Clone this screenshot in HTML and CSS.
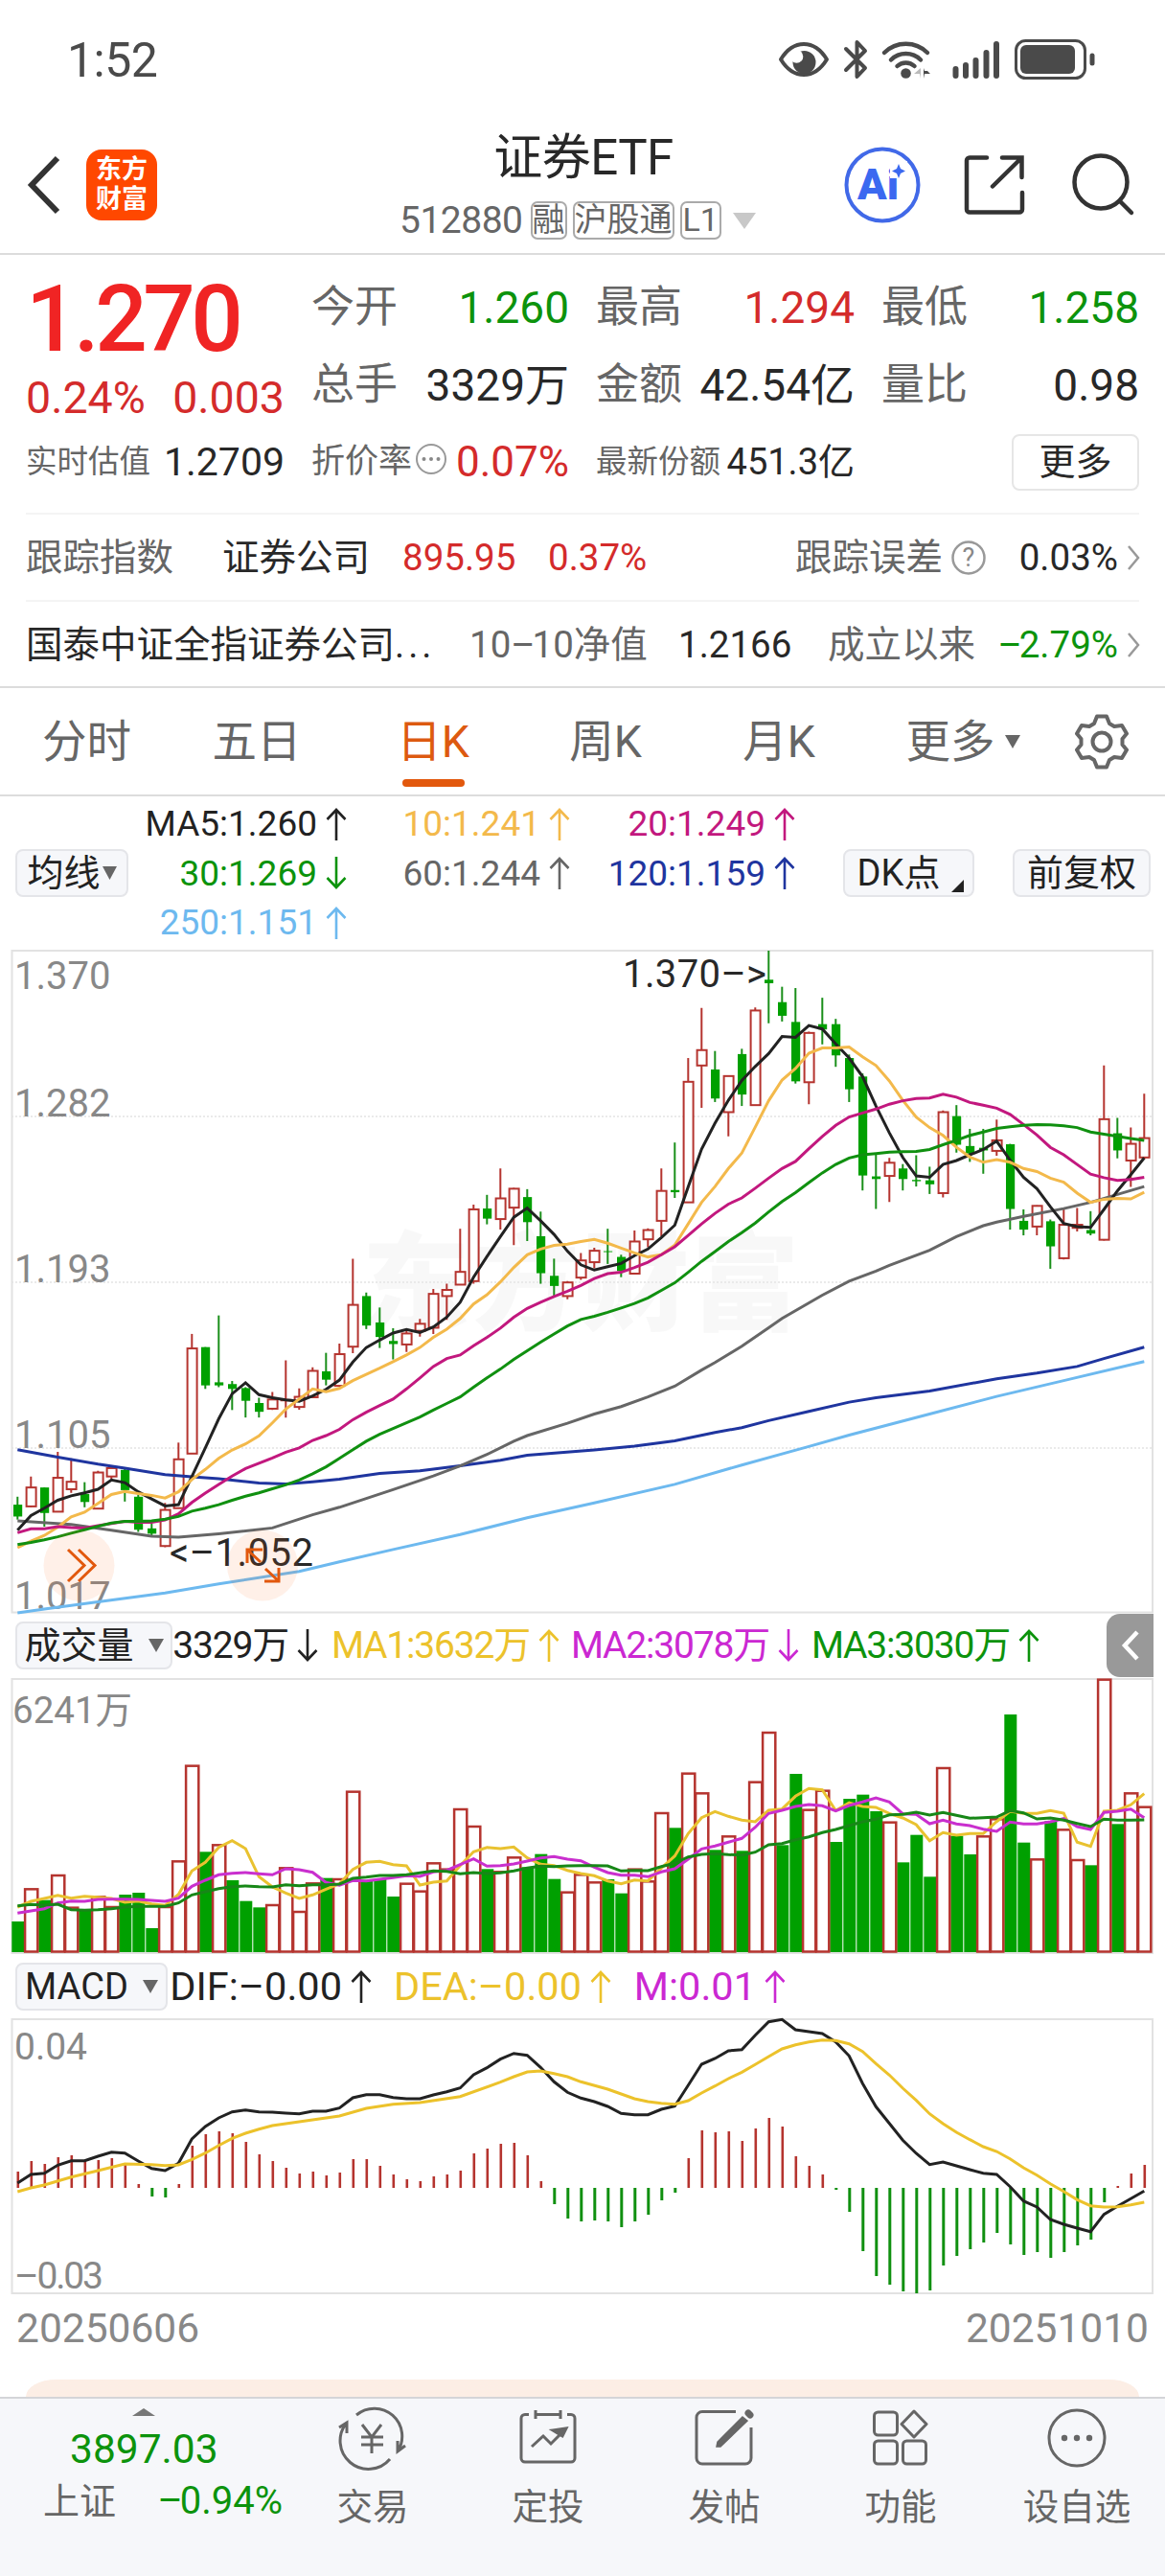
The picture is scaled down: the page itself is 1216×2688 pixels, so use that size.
FILE: index.html
```
<!DOCTYPE html>
<html lang="zh-CN">
<head>
    <meta charset="UTF-8">
    <meta name="viewport" content="width=device-width, initial-scale=1.0">
    <title>证券ETF 512880</title>
    <link rel="stylesheet" href="styles.css">
</head>
<body>
    <svg class="defs" width="0" height="0">
        <symbol id="up" viewBox="0 0 22 36"><path d="M11 35V3M1.5 13L11 3l9.500 10" fill="none" stroke="currentColor" stroke-width="2.600"/></symbol>
        <symbol id="down" viewBox="0 0 22 36"><path d="M11 1v32M1.500 23L11 33l9.500-10" fill="none" stroke="currentColor" stroke-width="2.600"/></symbol>
        <symbol id="chevron" viewBox="0 0 14 28"><path d="M2 2l10 12L2 26" fill="none" stroke="#999" stroke-width="2.500"/></symbol>
    </svg>

    <div class="status">
        <span class="clock">1:52</span>
        <svg width="336" height="46" viewBox="810 39 336 46">
            <path d="M815 61C822 49.500 830 45 839 45S856 49.500 863 61C856 72.500 848 77 839 77S822 72.500 815 61Z" fill="none" stroke="#4a4a4a" stroke-width="4" stroke-linejoin="round"/>
            <circle cx="839.500" cy="64" r="12" fill="#4a4a4a"/>
            <circle cx="831.500" cy="58" r="6.800" fill="#fff"/>
            <path d="M883 50l20 20-8.500 9V43l8.500 9-20 20" fill="none" stroke="#4a4a4a" stroke-width="4" stroke-linecap="round" stroke-linejoin="round"/>
            <path d="M923 54a32 32 0 0 1 45 0M930 61.500a22 22 0 0 1 31 0M936.500 68a13 13 0 0 1 18 0" fill="none" stroke="#4a4a4a" stroke-width="4.500" stroke-linecap="round"/>
            <circle cx="945.500" cy="75.500" r="5.300" fill="#4a4a4a"/>
            <path d="M961 70v11l-1-5h-6z" fill="#bbb"/>
            <path d="M964 70v11l1-5h6l-3-3h-3z" fill="#4a4a4a"/>
            <path d="M997.500 71v7M1008 67v11M1018.500 62v16M1029.500 54v24M1040 45v33" stroke="#4a4a4a" stroke-width="6" stroke-linecap="round"/>
            <rect x="1060.500" y="41.500" width="72" height="39" rx="10" fill="none" stroke="#4a4a4a" stroke-width="3"/>
            <rect x="1065" y="46" width="57" height="30" rx="6" fill="#4a4a4a"/>
            <path d="M1140 57v8" stroke="#4a4a4a" stroke-width="5" stroke-linecap="round"/>
        </svg>
    </div>

    <div class="header">
        <div class="header-left">
            <svg width="36" height="62" viewBox="0 0 36 62"><path d="M32 3L5 31l27 28" fill="none" stroke="#333" stroke-width="6"/></svg>
            <div class="logo"><span>东方</span><span>财富</span></div>
        </div>
        <div class="title-box">
            <div class="title">证券ETF</div>
            <div class="subtitle">
                <span>512880</span>
                <i class="badge">融</i><i class="badge">沪股通</i><i class="badge">L1</i>
                <svg width="24" height="17"><path d="M0 0h24L12 17z" fill="#c8c8c8"/></svg>
            </div>
        </div>
        <svg class="header-icons" width="316" height="84" viewBox="880 151 316 84">
            <circle cx="921" cy="193" r="37.500" fill="none" stroke="#4169e8" stroke-width="4"/>
            <text x="895" y="208" class="ai-text">Ai</text>
            <path d="M929 168h18v18h-18z" fill="#fff"/>
            <path d="M938 171l2 5 5 2.500-5 2.500-2 5-2-5-5-2.500 5-2.500z" fill="#3b69f0"/>
            <path d="M1030 164.500h-18a3 3 0 0 0-3 3v51a3 3 0 0 0 3 3h52a3 3 0 0 0 3-3V201M1046 164.500h20.500V185M1066 165l-30 29.500" fill="none" stroke="#333" stroke-width="4.500" stroke-linecap="round"/>
            <circle cx="1149" cy="190" r="27.500" fill="none" stroke="#333" stroke-width="4.500"/>
            <path d="M1169 210l12 12" stroke="#333" stroke-width="4.500" stroke-linecap="round"/>
        </svg>
    </div>

    <div class="quote">
        <div class="quote-grid">
            <div class="price-box">
                <div class="price">1.270</div>
                <div class="change"><span>0.24%</span><span>0.003</span></div>
            </div>
            <div class="cell"><label>今开</label><b class="green">1.260</b></div>
            <div class="cell"><label>最高</label><b class="red">1.294</b></div>
            <div class="cell"><label>最低</label><b class="green">1.258</b></div>
            <div class="cell"><label>总手</label><b>3329万</b></div>
            <div class="cell"><label>金额</label><b>42.54亿</b></div>
            <div class="cell"><label>量比</label><b>0.98</b></div>
            <div class="cell small"><label>实时估值</label><b>1.2709</b></div>
            <div class="cell small rate">
                <label>折价率</label>
                <svg width="34" height="34"><circle cx="17" cy="17" r="15" fill="none" stroke="#999" stroke-width="2"/><g fill="#888"><circle cx="9.500" cy="17" r="2"/><circle cx="17" cy="17" r="2"/><circle cx="24.500" cy="17" r="2"/></g></svg>
                <b class="red">0.07%</b>
            </div>
            <div class="cell small share"><label>最新份额</label><b>451.3亿</b></div>
            <div class="cell last"><button class="more">更多</button></div>
        </div>
        <div class="line index-line">
            <span class="gray">跟踪指数</span>
            <span>证券公司</span>
            <span class="red">895.95</span>
            <span class="red">0.37%</span>
            <span class="gray">跟踪误差</span>
            <svg width="38" height="38"><circle cx="19" cy="19" r="16.500" fill="none" stroke="#999" stroke-width="2.500"/><text x="19" y="28" class="help">?</text></svg>
            <span class="right">0.03%</span>
            <svg width="14" height="28"><use href="#chevron"/></svg>
        </div>
        <div class="line fund-line">
            <span>国泰中证全指证券公司<i class="dots">...</i></span>
            <span class="gray">10<em>–</em>10净值</span>
            <span>1.2166</span>
            <span class="gray">成立以来</span>
            <span class="green right"><em>–</em>2.79%</span>
            <svg width="14" height="28"><use href="#chevron"/></svg>
        </div>
    </div>

    <div class="tabs">
        <span>分时</span>
        <span>五日</span>
        <span class="active">日K</span>
        <span>周K</span>
        <span>月K</span>
        <span class="tab-more">更多<svg width="16" height="14"><path d="M0 0h16L8 14z" fill="#666"/></svg></span>
        <svg class="gear" width="60" height="60" viewBox="-30 -30 60 60">
            <path d="M-5-26.500H5L8-19 13-16 21-17 26-8.500 21.500-3V3L26 8.500 21 17 13 16 8 19 5 26.500H-5L-8 19-13 16-21 17-26 8.500-21.500 3V-3L-26-8.500-21-17-13-16-8-19Z" fill="none" stroke="#666" stroke-width="4" stroke-linejoin="round"/>
            <circle r="9.500" fill="none" stroke="#666" stroke-width="4"/>
        </svg>
    </div>

    <div class="legend">
        <button class="pill ma-btn">均线<svg width="15" height="14"><path d="M0 0h15L7.500 14z" fill="#666"/></svg></button>
        <div class="ma-grid">
            <span class="black">MA5:1.260<svg><use href="#up"/></svg></span>
            <span class="orange">10:1.241<svg><use href="#up"/></svg></span>
            <span class="pink">20:1.249<svg><use href="#up"/></svg></span>
            <span class="green">30:1.269<svg><use href="#down"/></svg></span>
            <span class="gray">60:1.244<svg><use href="#up"/></svg></span>
            <span class="blue">120:1.159<svg><use href="#up"/></svg></span>
            <span class="sky">250:1.151<svg><use href="#up"/></svg></span>
        </div>
        <button class="pill dk-btn">DK点<svg width="13" height="13"><path d="M13 0v13H0z" fill="#222"/></svg></button>
        <button class="pill fq-btn">前复权</button>
    </div>

    <svg class="chart" width="1216" height="693" viewBox="0 991 1216 693">
        <text x="378" y="1380" class="watermark" textLength="456">东方财富</text>
        <g class="grid">
            <path d="M12 1165H1203M12 1338H1203M12 1511H1203"/>
        </g>
        <rect x="12.500" y="992" width="1190.500" height="690.500" class="frame"/>
        <g class="axis">
            <text x="15" y="1032">1.370</text>
            <text x="15" y="1165">1.282</text>
            <text x="15" y="1338">1.193</text>
            <text x="15" y="1511">1.105</text>
            <text x="15" y="1679">1.017</text>
        </g>
        <g id="kline"></g>
        <text x="650" y="1030" class="mark" textLength="150">1.370–&gt;</text>
        <text x="177" y="1634" class="mark" textLength="150">&lt;–1.052</text>
        <g fill="#ff6a1a" fill-opacity=".1">
            <circle cx="82.500" cy="1633.500" r="37"/>
            <circle cx="274" cy="1633.500" r="37"/>
        </g>
        <g fill="none" stroke="#e2580d" stroke-width="3">
            <path d="M71 1617l17 16.500L71 1650M82 1617l17 16.500L82 1650"/>
            <path d="M274 1617h-16v14M258 1617l14 13M276 1650h15v-14M291 1650l-14-13"/>
        </g>
    </svg>

    <div class="toolbar">
        <button class="pill">成交量<svg width="16" height="14"><path d="M0 0h16L8 14z" fill="#666"/></svg></button>
        <span class="black v0">3329万<svg><use href="#down"/></svg></span>
        <span class="yellow v1">MA1:3632万<svg><use href="#up"/></svg></span>
        <span class="purple v2">MA2:3078万<svg><use href="#down"/></svg></span>
        <span class="green v3">MA3:3030万<svg><use href="#up"/></svg></span>
        <div class="drawer"><svg width="20" height="34"><path d="M17 3L4 17l13 14" fill="none" stroke="#fff" stroke-width="4.500"/></svg></div>
    </div>
    <svg class="chart" width="1216" height="290" viewBox="0 1750 1216 290">
        <rect x="12.500" y="1752" width="1190.500" height="286" class="frame"/>
        <text x="13" y="1798" class="vol-label">6241万</text>
        <g id="volume"></g>
    </svg>

    <div class="toolbar macd-bar">
        <button class="pill">MACD<svg width="16" height="14"><path d="M0 0h16L8 14z" fill="#666"/></svg></button>
        <span class="black m0">DIF:–0.00<svg><use href="#up"/></svg></span>
        <span class="yellow m1">DEA:–0.00<svg><use href="#up"/></svg></span>
        <span class="purple m2">M:0.01<svg><use href="#up"/></svg></span>
    </div>
    <svg class="chart" width="1216" height="290" viewBox="0 2105 1216 290">
        <rect x="12.500" y="2107" width="1190.500" height="286" class="frame"/>
        <g class="axis macd-axis">
            <text x="15" y="2149">0.04</text>
            <text x="15" y="2388" textLength="93">–0.03</text>
        </g>
        <g id="macd"></g>
    </svg>
    <div class="dates"><span>20250606</span><span>20251010</span></div>

    <div class="banner"></div>

    <div class="bottom">
        <div class="market">
            <svg width="24" height="8"><path d="M12 0l12 8H0z" fill="#777"/></svg>
            <div class="market-value">3897.03</div>
            <div class="market-row"><span>上证</span><b><em>–</em>0.94%</b></div>
        </div>
        <div class="nav nav-trade">
            <svg width="76" height="68" viewBox="352 2510 76 68">
                <path d="M373 2520a29 29 0 0 1 43 38M363 2528a29 29 0 0 0 45 38M355 2533l8-5v11M424 2552l-8 6v-11"/>
                <path d="M379 2530l10 13 10-13M389 2543v17M378 2543h23M378 2551h23"/>
            </svg>
            交易
        </div>
        <div class="nav">
            <svg width="64" height="68" viewBox="541 2510 64 68">
                <path d="M553 2519.500h-4a4 4 0 0 0-4 4V2565a4 4 0 0 0 4 4h48a4 4 0 0 0 4-4v-41.500a4 4 0 0 0-4-4h-4M560 2515v9M586 2515v9M560 2519.500h26"/>
                <path d="M556 2553l12-11 8 8 14-14"/><path d="M578 2536l14-2-4 8z" fill="#666"/>
            </svg>
            定投
        </div>
        <div class="nav">
            <svg width="66" height="68" viewBox="723 2510 66 68">
                <path d="M768 2516.500h-35a6 6 0 0 0-6 6V2565a6 6 0 0 0 6 6h45a6 6 0 0 0 6-6v-32"/>
                <path d="M781 2518l2 2" stroke-width="7" stroke-linecap="round"/>
                <path d="M775 2522l5 4-28 27h-4l1-5z" fill="#666" stroke-width="1.500"/>
            </svg>
            发帖
        </div>
        <div class="nav">
            <svg width="66" height="68" viewBox="908 2510 66 68">
                <rect x="913.500" y="2517" width="24" height="24" rx="4"/>
                <rect x="913.500" y="2547" width="24" height="24" rx="4"/>
                <rect x="943.500" y="2547" width="24" height="24" rx="4"/>
                <path d="M955 2516l13 13.500-13 13.500-13-13.500z" stroke-linejoin="round"/>
            </svg>
            功能
        </div>
        <div class="nav nav-more">
            <svg width="66" height="68" viewBox="1091 2510 66 68">
                <circle cx="1124" cy="2544" r="29"/>
                <g fill="#666" stroke="none"><circle cx="1111" cy="2544" r="3.200"/><circle cx="1124" cy="2544" r="3.200"/><circle cx="1137" cy="2544" r="3.200"/></g>
            </svg>
            设自选
        </div>
    </div>

    <script src="chart.js"></script>
</body>
</html>
```
FILE: styles.css
```
* {
    box-sizing: border-box;
}
body {
    margin: 0;
    width: 1216px;
    height: 2688px;
    overflow: hidden;
    background: #fff;
    color: #282828;
    font-family: Roboto, "Noto Sans CJK SC", sans-serif;
}
svg {
    display: block;
    flex: none;
}
.defs {
    position: absolute;
}
b, i, em {
    font-weight: normal;
    font-style: normal;
}
em {
    letter-spacing: -3px;
}
button {
    font-family: inherit;
    color: inherit;
    padding: 0;
    margin: 0;
}
.red { color: #d42b2b; }
.green { color: #0c930c; }
.gray { color: #666; }
.black { color: #222; }
.orange { color: #f3b94b; }
.pink { color: #c2187e; }
.blue { color: #1f359f; }
.sky { color: #6db9ef; }
.yellow { color: #ecc22b; }
.purple { color: #cb28d2; }

/* status bar */
.status {
    height: 125px;
    padding: 0 70px 0 70px;
    display: flex;
    align-items: center;
    justify-content: space-between;
}
.clock {
    font-size: 50px;
    color: #4a4a4a;
    letter-spacing: -0.5px;
}

/* header */
.header {
    height: 141px;
    border-bottom: 2px solid #dcdcdc;
    padding: 0 20px 0 28px;
    display: grid;
    grid-template-columns: 340px 1fr 316px;
}
.header-left {
    display: flex;
    align-items: center;
    gap: 26px;
    height: 136px;
}
.logo {
    width: 74px;
    height: 74px;
    border-radius: 16px;
    background: #ff4800;
    color: #fff;
    font-size: 27px;
    line-height: 31px;
    font-weight: 700;
    display: flex;
    flex-direction: column;
    align-items: center;
    justify-content: center;
}
.title {
    font-size: 51px;
    line-height: 80px;
    text-align: center;
    padding-right: 30px;
    letter-spacing: -0.5px;
}
.subtitle {
    display: flex;
    align-items: center;
    height: 50px;
    margin-left: 49px;
    font-size: 39px;
    line-height: 50px;
    color: #666;
    letter-spacing: -0.5px;
}
.badge {
    height: 40px;
    line-height: 35px;
    padding: 0;
    margin-left: 6px;
    border: 2px solid #aaa;
    border-radius: 7px;
    font-size: 34px;
    letter-spacing: 0;
}
.badge:nth-of-type(1) { margin-left: 8px; }
.badge:nth-of-type(3) { padding: 0 1px; }
.subtitle svg {
    margin-left: 12px;
}
.header-icons {
    margin-top: 26px;
}
.ai-text {
    font-size: 45px;
    font-weight: 900;
    fill: #3b69f0;
}

/* quote */
.quote {
    height: 452px;
    padding: 14px 27px 0;
    border-bottom: 2px solid #dcdcdc;
}
.quote-grid {
    display: grid;
    grid-template-columns: 270px 269px 270px 269px;
    grid-template-rows: 81px 81px 80px;
    column-gap: 28px;
    height: 255px;
    line-height: 60px;
}
.price-box {
    grid-row: span 2;
    color: #d42b2b;
}
.price {
    font-size: 96px;
    font-weight: 500;
    line-height: 106px;
    color: #f02424;
    letter-spacing: -4.5px;
}
.change {
    display: flex;
    justify-content: space-between;
    font-size: 46.5px;
    line-height: 58px;
}
.cell {
    display: flex;
    align-items: center;
    justify-content: space-between;
    font-size: 46px;
}
.cell label {
    font-size: 45px;
    color: #666;
}
.cell.small {
    font-size: 41px;
}
.cell.small label {
    font-size: 32.5px;
}
.cell.rate label {
    font-size: 35px;
}
.cell.rate b {
    font-size: 44px;
}
.cell.rate svg {
    margin: -6px 6px 0 0;
}
.cell.share b {
    font-size: 38px;
}
.cell.last {
    justify-content: flex-end;
}
.more {
    width: 133px;
    height: 59px;
    border: 2px solid #e6e6e6;
    border-radius: 8px;
    background: #fff;
    font-size: 38px;
    line-height: 50px;
}
.line {
    height: 91px;
    border-top: 2px solid #f4f4f4;
    display: grid;
    align-items: center;
    font-size: 38.5px;
    line-height: 50px;
    white-space: nowrap;
}
.dots {
    letter-spacing: 4px;
}
.index-line {
    grid-template-columns: 205px 188px 152px 258px 162px 70px 105px 23px;
}
.fund-line {
    grid-template-columns: 463px 218px 156px 171px 132px 23px;
}
.line .right {
    text-align: right;
}
.line svg:last-child {
    justify-self: end;
}
.help {
    font-size: 27px;
    fill: #888;
    text-anchor: middle;
}

/* period tabs */
.tabs {
    height: 113px;
    border-bottom: 2px solid #dcdcdc;
    display: grid;
    grid-template-columns: 181px 174px 194px 166px 196px 188px 117px;
    align-items: center;
    text-align: center;
    font-size: 46.5px;
    line-height: 112px;
    color: #666;
}
.tabs .active {
    color: #dd5a10;
    height: 112px;
    display: flex;
    flex-direction: column;
    align-items: center;
}
.tabs .active::after {
    content: "";
    width: 65px;
    height: 8px;
    border-radius: 4px;
    background: #e2580d;
    margin-top: -17px;
}
.tab-more {
    display: flex;
    align-items: center;
    justify-content: center;
    gap: 10px;
}
.gear {
    margin-left: 21px;
}

/* moving average legend */
.legend {
    height: 160px;
    display: flex;
    align-items: center;
    padding-left: 16px;
}
.pill {
    flex: none;
    height: 50px;
    display: flex;
    align-items: center;
    justify-content: center;
    background: #f6f7fa;
    border: 2px solid #e4e5e9;
    border-radius: 8px;
    font-size: 38px;
    line-height: 44px;
    color: #222;
}
.ma-btn {
    width: 118px;
    gap: 2px;
}
.ma-grid {
    width: 696px;
    display: grid;
    grid-template-columns: 228px 233px 235px;
    grid-auto-rows: 51.5px;
    font-size: 37px;
}
.ma-grid span,
.toolbar span {
    flex: none;
    display: flex;
    align-items: center;
    justify-content: flex-end;
}
.ma-grid svg,
.toolbar span svg {
    width: 22px;
    height: 36px;
    margin-left: 9px;
}
.dk-btn {
    width: 137px;
    margin-left: 50px;
    gap: 12px;
    padding-left: 4px;
}
.dk-btn svg {
    margin-top: 26px;
}
.fq-btn {
    width: 144px;
    margin-left: 40px;
}

/* charts */
.chart {
    overflow: visible;
}
.frame {
    fill: none;
    stroke: #e2e2e2;
    stroke-width: 2;
}
.grid {
    stroke: #e4e4e4;
    stroke-width: 1.5;
    stroke-dasharray: 2 2;
}
.axis, .vol-label {
    font-size: 40px;
    fill: #888;
}
.vol-label {
    font-size: 38.5px;
}
.macd-axis {
    font-size: 39px;
}
.mark {
    font-size: 40px;
    fill: #282828;
}
.watermark {
    font-size: 112px;
    font-weight: 900;
    fill: #f8f8f8;
}
.toolbar {
    height: 66px;
    padding-left: 16px;
    display: flex;
    align-items: center;
    font-size: 39px;
    line-height: 50px;
    letter-spacing: -1.2px;
    white-space: nowrap;
}
.toolbar .pill {
    width: 164px;
    gap: 15px;
    letter-spacing: 0;
}
.toolbar .v0 { width: 152px; }
.toolbar .v1 { width: 252px; }
.toolbar .v2 { width: 250px; }
.toolbar .v3 { width: 251px; }
.drawer {
    width: 49px;
    height: 66px;
    margin-left: auto;
    margin-right: 12px;
    border-radius: 14px 0 0 14px;
    background: #999;
    display: flex;
    align-items: center;
    justify-content: center;
}
.macd-bar {
    height: 65px;
    font-size: 41.5px;
    letter-spacing: 0;
}
.macd-bar .pill {
    width: 159px;
}
.toolbar .m0 { width: 213px; }
.toolbar .m1 { width: 250px; }
.toolbar .m2 { width: 182px; }
.dates {
    height: 68px;
    padding: 0 17px;
    display: flex;
    align-items: center;
    justify-content: space-between;
    font-size: 42.5px;
    color: #888;
}
.banner {
    height: 18px;
    margin: 20px 27px 0;
    border-radius: 42px 42px 0 0 / 24px 24px 0 0;
    background: #fceee5;
}

/* bottom bar */
.bottom {
    height: 187px;
    background: #f6f7fa;
    border-top: 2px solid #d4d5d8;
    display: grid;
    grid-template-columns: 298px 182px 184px 184px 184px 184px;
}
.market {
    padding: 10px 0 0 45px;
}
.market > svg {
    margin-left: 93px;
}
.market-value {
    margin: 6px 0 0 28px;
    font-size: 42.5px;
    line-height: 58px;
    color: #0c930c;
}
.market-row {
    display: flex;
    justify-content: space-between;
    width: 250px;
    font-size: 38px;
    line-height: 50px;
    color: #666;
}
.market-row b {
    font-size: 40px;
    color: #0c930c;
}
.nav {
    display: flex;
    flex-direction: column;
    align-items: center;
    padding-top: 7px;
    font-size: 37.5px;
    line-height: 76px;
    color: #666;
}
.nav svg {
    fill: none;
    stroke: #666;
    stroke-width: 3;
}
```
FILE: chart.js
```
// every series has one value per trading day, 14px apart
const x = i => 18.3 + i * 14;
const RED = '#b5342f';
const GREEN = '#00a000';

// price panel: 1504 units high, offset 26
const py = v => 992 + (v - 26) / 2.178;
// volume and macd panels: 3 units per pixel
const vy = v => 1680 + v / 3;
const my = v => 2040 + v / 3;

// [rise, high, body top, body bottom, low]
const candles = [
    [0,1267,1285,1312,1319],[1,1221,1246,1289,1291],[0,1246,1246,1304,1335],[1,1165,1224,1301,1301],[1,1180,1233,1250,1258],
    [0,1234,1261,1279,1291],[1,1208,1212,1294,1296],[1,1196,1202,1221,1226],[0,1202,1206,1252,1278],[0,1262,1267,1342,1347],
    [0,1328,1339,1351,1356],[1,1281,1297,1379,1382],[1,1144,1182,1293,1293],[1,897,930,1169,1169],[0,927,927,1014,1022],
    [0,855,1007,1014,1018],[0,1004,1011,1022,1070],[0,1018,1020,1049,1087],[0,1042,1054,1074,1087],[1,1029,1046,1067,1070],
    [1,957,1047,1048,1087],[1,1021,1040,1063,1069],[1,973,981,1041,1043],[0,940,982,1001,1014],[1,919,943,1015,1017],
    [1,726,831,926,941],[0,803,811,878,886],[0,837,871,904,929],[0,884,913,920,955],[1,890,896,921,938],
    [1,863,874,890,903],[1,795,806,883,897],[1,783,797,811,865],[1,658,756,785,785],[1,603,614,777,783],
    [0,581,612,635,648],[1,521,589,636,660],[1,565,567,610,695],[0,568,586,643,686],[0,619,675,759,783],
    [0,726,765,788,810],[1,777,780,811,818],[1,713,730,769,774],[1,701,708,734,748],[0,658,709,711,738],
    [0,717,722,754,768],[1,662,687,760,762],[1,657,661,682,700],[1,521,572,640,675],[0,462,570,575,588],
    [1,270,324,598,598],[1,156,252,287,383],[0,254,296,362,370],[1,309,311,393,448],[0,249,261,353,379],
    [1,155,162,377,379],[0,26,92,100,191],[0,108,143,174,187],[0,111,188,323,328],[1,210,213,325,375],
    [0,133,193,205,239],[0,181,193,264,290],[0,262,270,341,370],[0,305,312,537,571],[0,489,539,545,613],
    [1,497,508,538,597],[0,511,521,545,571],[0,491,547,550,562],[0,517,548,557,579],[1,389,393,577,587],
    [0,377,402,467,485],[0,431,470,487,506],[0,431,474,480,533],[1,410,457,481,492],[0,465,466,613,660],
    [0,614,640,660,673],[1,605,606,653,673],[0,637,641,698,749],[1,613,649,725,728],[1,611,649,656,664],
    [0,618,661,669,673],[1,287,409,683,685],[0,406,441,480,498],[1,428,465,503,563],[1,351,452,496,500]
];

const ma5 = [1343,1310,1293,1275,1265,1258,1250,1229,1235,1256,1272,1288,1285,1221,1156,1090,1033,1008,1035,1042,1047,1050,1038,1023,1002,961,928,911,895,887,894,881,859,825,768,721,676,632,611,640,671,709,740,752,744,737,719,704,678,650,563,477,418,366,321,289,260,221,223,196,204,238,270,312,379,440,496,538,541,512,503,490,478,459,502,541,567,608,646,653,655,614,572,535,497];
const ma10 = [1383,1368,1355,1336,1313,1302,1282,1262,1255,1260,1264,1270,1256,1228,1205,1180,1161,1147,1129,1099,1068,1045,1022,1028,1021,1003,989,975,960,945,928,905,886,862,829,808,779,746,717,704,696,693,687,682,691,702,713,722,717,695,647,598,562,521,486,427,367,320,294,259,247,247,245,267,287,322,366,404,428,446,473,495,507,501,507,521,528,543,552,577,598,591,589,590,575];
const ma20 = [1349,1340,1340,1335,1337,1338,1333,1328,1323,1325,1325,1320,1306,1280,1259,1239,1220,1203,1191,1179,1166,1156,1139,1128,1114,1092,1075,1060,1045,1022,997,971,953,945,924,905,884,859,839,825,812,800,787,771,760,757,746,734,717,699,673,647,623,602,588,566,543,521,505,476,448,423,404,395,386,375,367,362,361,352,359,371,377,384,398,421,445,473,490,512,534,542,548,546,541];
const ma30 = [1376,1371,1365,1358,1350,1342,1334,1327,1323,1323,1322,1318,1312,1300,1293,1285,1275,1266,1258,1249,1240,1229,1215,1199,1180,1160,1141,1125,1112,1099,1086,1070,1055,1040,1018,997,977,955,935,916,897,879,864,857,848,838,828,815,798,781,757,732,710,687,667,645,620,596,576,553,531,512,497,490,487,484,483,482,478,467,457,446,438,430,426,423,421,422,424,428,438,443,448,453,457];
// slow averages are kept as [day, value] knots
const ma60 = [[0,1322],[4,1330],[7,1343],[10,1357],[12,1359],[15,1351],[19,1338],[22,1308],[24,1291],[26,1271],[28,1251],[31,1220],[33,1197],[35,1171],[37,1141],[38,1128],[41,1100],[43,1079],[45,1062],[47,1040],[49,1016],[51,979],[52,962],[54,925],[56,883],[57,862],[60,809],[62,777],[64,754],[65,741],[68,707],[70,676],[72,651],[73,643],[75,630],[78,612],[80,598],[82,580],[84,562]];
const ma120 = [[0,1160],[3,1177],[6,1193],[8,1202],[11,1217],[13,1222],[15,1226],[18,1236],[20,1238],[22,1233],[24,1227],[27,1214],[30,1208],[33,1197],[36,1184],[38,1173],[43,1161],[46,1152],[49,1140],[52,1121],[54,1110],[56,1094],[59,1073],[62,1052],[64,1042],[68,1027],[73,999],[76,986],[79,971],[81,953],[84,927]];
const ma250 = [[0,1531],[2,1522],[6,1506],[11,1486],[15,1465],[21,1437],[24,1415],[28,1387],[33,1353],[38,1315],[43,1281],[49,1239],[54,1195],[59,1153],[62,1127],[68,1079],[73,1039],[78,1003],[84,960]];

const volumes = [975,874,908,831,932,936,898,930,891,885,996,930,787,488,757,736,846,911,931,924,808,945,856,839,843,569,848,843,897,857,881,793,812,624,678,811,820,775,805,764,842,884,829,853,843,887,812,850,636,682,512,574,751,709,754,539,384,736,513,626,566,726,591,578,630,665,790,704,835,495,707,765,709,655,327,728,781,661,688,783,799,218,670,574,617];
// days where the volume bar colour differs from the candle
const volRise = [15, 56, 60, 72];
const volFall = [];
const volMa1 = [930,912,903,893,902,896,899,903,915,911,920,925,890,817,790,743,722,747,835,867,886,903,892,874,857,812,790,787,797,801,861,852,848,800,757,743,747,742,776,796,800,815,825,832,848,857,845,848,808,770,700,650,631,646,658,663,627,623,583,559,563,628,603,615,618,637,651,672,722,697,705,700,700,662,630,637,637,628,636,727,740,630,627,610,575];
const volMa2 = [949,942,935,917,911,912,906,905,905,906,909,912,902,865,846,829,824,822,826,829,810,813,821,853,862,847,848,843,838,832,834,820,815,797,779,802,800,795,786,776,772,780,785,805,822,830,830,835,820,810,780,748,739,727,715,680,637,627,615,609,613,629,612,601,588,601,638,640,669,658,670,675,686,693,664,670,670,663,653,678,687,634,630,623,650];
const volMa3 = [926,922,924,921,938,940,938,935,930,928,928,928,917,892,882,872,866,864,866,867,860,863,860,860,858,840,836,831,831,829,823,817,818,826,822,825,823,817,808,802,803,801,800,800,801,817,815,816,803,793,773,765,763,766,767,758,735,731,719,710,697,687,675,663,655,641,640,633,642,634,643,652,650,648,628,635,654,651,658,668,678,655,658,658,657];

const ZERO = 729;
const hist = [678,645,654,633,627,645,642,636,657,717,756,759,717,597,561,552,558,585,624,645,666,684,678,690,681,639,639,660,687,702,708,693,687,675,621,606,591,588,627,708,780,825,834,831,834,852,834,813,768,744,636,549,555,552,582,543,510,537,630,660,687,735,804,927,1005,1032,1053,1059,1050,972,942,921,900,870,906,939,930,948,930,909,891,774,723,684,657];
const dif = [714,687,683,658,644,644,630,617,620,645,668,675,652,576,537,510,491,485,491,492,495,497,489,489,479,447,437,437,446,450,450,438,428,416,375,353,326,308,314,352,397,430,448,459,474,496,500,500,483,473,408,342,324,300,296,251,209,202,234,240,246,272,316,402,475,527,580,621,656,648,660,672,683,687,725,770,789,828,843,855,866,812,787,763,739];
const dea = [[0,741],[1,729],[2,720],[4,695],[6,675],[8,654],[10,656],[11,659],[12,657],[13,640],[14,620],[15,596],[16,574],[17,558],[18,545],[19,534],[21,522],[24,504],[26,480],[28,467],[30,462],[33,443],[36,398],[37,381],[38,366],[39,363],[40,371],[41,381],[42,397],[44,420],[46,450],[47,459],[48,464],[49,467],[50,456],[51,432],[52,410],[53,387],[54,367],[55,343],[56,318],[57,294],[58,281],[59,272],[60,266],[61,268],[62,278],[63,302],[64,340],[65,376],[66,417],[67,455],[68,497],[69,528],[70,555],[71,578],[72,600],[73,615],[74,638],[75,666],[76,689],[77,716],[78,740],[79,766],[80,785],[81,789],[82,788],[83,782],[84,774]];

function line(data, y, color, width = 3) {
    const pts = data.map((d, i) => Array.isArray(d) ? [d[0], d[1]] : [i, d]);
    return `<polyline points="${pts.map(p => x(p[0]).toFixed(1) + ',' + y(p[1]).toFixed(1)).join(' ')}" fill="none" stroke="${color}" stroke-width="${width}"/>`;
}

function drawKline() {
    let out = '';
    candles.forEach(([rise, high, top, bottom, low], i) => {
        const h = py(bottom) - py(top);
        if (rise) {
            out += `<path d="M${x(i)} ${py(high)}V${py(top)}M${x(i)} ${py(bottom)}V${py(low)}" stroke="${RED}" stroke-width="2"/>`;
            out += `<rect x="${x(i) - 4.7}" y="${py(top)}" width="10" height="${h}" fill="#fff" stroke="${RED}" stroke-width="2"/>`;
        } else {
            out += `<path d="M${x(i)} ${py(high)}V${py(low)}" stroke="#1a8f1a" stroke-width="2"/>`;
            out += `<rect x="${x(i) - 4.3}" y="${py(top)}" width="9.200" height="${h}" fill="${GREEN}"/>`;
        }
    });
    out += line(ma250, py, '#6db9ef') + line(ma120, py, '#1f359f') + line(ma60, py, '#666');
    out += line(ma5, py, '#222') + line(ma10, py, '#f3b94b') + line(ma20, py, '#c2187e') + line(ma30, py, '#109010');
    document.getElementById('kline').innerHTML = out;
}

function drawVolume() {
    let green = '';
    let red = '';
    volumes.forEach((v, i) => {
        const top = vy(v);
        const rise = (candles[i][0] || volRise.includes(i)) && !volFall.includes(i);
        if (rise) {
            red += `<rect x="${x(i) - 6.2}" y="${top}" width="13.200" height="${2036.5 - top}" fill="#fff" stroke="${RED}" stroke-width="2.500"/>`;
        } else {
            green += `<rect x="${x(i) - 6}" y="${top}" width="13" height="${2037 - top}" fill="${GREEN}"/>`;
        }
    });
    document.getElementById('volume').innerHTML = green + red +
        line(volMa1, vy, '#e9c230') + line(volMa2, vy, '#c92fce') + line(volMa3, vy, '#178717');
}

function drawMacd() {
    let out = '';
    hist.forEach((v, i) => {
        out += `<path d="M${x(i) + 0.5} ${my(ZERO)}V${my(v)}" stroke="${v < ZERO ? RED : '#109010'}" stroke-width="${v < ZERO ? 2.6 : 3}"/>`;
    });
    document.getElementById('macd').innerHTML = out + line(dif, my, '#222') + line(dea, my, '#ecc22b');
}

drawKline();
drawVolume();
drawMacd();
```
